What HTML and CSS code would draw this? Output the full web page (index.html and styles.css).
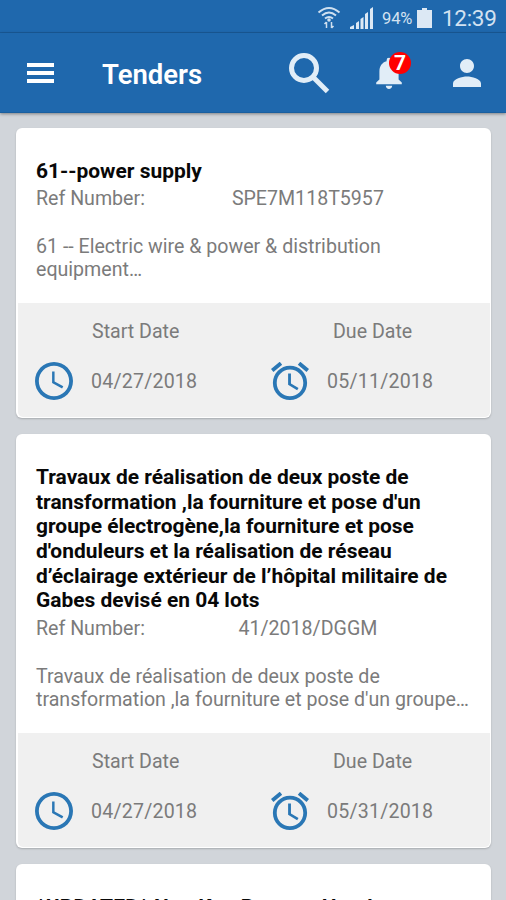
FILE: index.html
```html
<!DOCTYPE html>
<html lang="en">
<head>
<meta charset="utf-8">
<title>Tenders</title>
<link rel="stylesheet" href="styles.css">
</head>
<body>
<svg class="defs" aria-hidden="true">
  <symbol id="clock" viewBox="2 2 20 20"><path d="M11.99 2C6.47 2 2 6.48 2 12s4.47 10 9.99 10C17.52 22 22 17.52 22 12S17.52 2 11.99 2zM12 20c-4.42 0-8-3.58-8-8s3.58-8 8-8 8 3.58 8 8-3.58 8-8 8zm.3-13H11v6l5.250 2.900.65-1.130-4.600-2.570z"/></symbol>
  <symbol id="alarm" viewBox="2 2 20 20"><path d="M22 5.720l-4.600-3.860-1.290 1.530 4.600 3.860L22 5.720zM7.880 3.390L6.600 1.860 2 5.710l1.290 1.530 4.590-3.850zM12.500 8H11v6l4.750 2.850.75-1.230-4-2.370V8zM12 4c-4.970 0-9 4.030-9 9s4.020 9 9 9a9 9 0 0 0 0-18zm0 16c-3.870 0-7-3.130-7-7s3.130-7 7-7 7 3.130 7 7-3.130 7-7 7z"/></symbol>
</svg>
<div class="statusbar">
  <svg class="wifi" viewBox="0 0 24 24"><g fill="none" stroke="#cfe0f0" stroke-width="2"><path d="M1.500 6.500Q12-2.500 22.500 6.500M5 9.500Q12 3.500 19 9.500M8 12.500Q12 9.500 16 12.500"/><path stroke-width="1.500" d="M9.500 22v-6M7.500 18l2-2M14.500 16v6M16.500 20l-2 2"/></g><circle cx="12" cy="14" r="1.800" fill="#cfe0f0"/></svg>
  <svg class="signal" viewBox="0 0 24 24"><path fill="#dce8f4" d="M0 23v-2l4-2v4zM6 17l3-2v8H6zM10.500 13l3-2v12h-3zM15 8l3-2v17h-3zM20 3l3-2v22h-3z"/></svg>
  <span class="percent">94%</span>
  <svg class="battery" viewBox="0 0 15 20"><path fill="#dce8f4" d="M5 0h5v2h5v18H0V2h5z"/></svg>
  <span class="time">12:39</span>
</div>
<header class="appbar">
  <svg class="menu" viewBox="0 0 27 20"><path fill="#fff" d="M0 0h27v4H0zM0 8h27v4H0zM0 16h27v4H0z"/></svg>
  <h1>Tenders</h1>
  <svg class="search" viewBox="0 0 42 42"><g fill="none" stroke="#e1edf7" stroke-width="5"><circle cx="16" cy="16" r="12.500"/><path d="M25 25l14.500 14.500"/></g></svg>
  <div class="notify">
    <svg viewBox="4 2 16 20"><path fill="#e1edf7" d="M12 22c1.100 0 2-.9 2-2h-4c0 1.100.89 2 2 2zm6-6v-5c0-3.070-1.640-5.640-4.500-6.320V4a1.500 1.500 0 0 0-3 0v.68C7.630 5.360 6 7.920 6 11v5l-2 2v1h16v-1l-2-2z"/></svg>
    <span class="badge">7</span>
  </div>
  <svg class="person" viewBox="4 4 16 16"><path fill="#e1edf7" d="M12 12c2.210 0 4-1.790 4-4s-1.790-4-4-4-4 1.790-4 4 1.790 4 4 4zm0 2c-2.670 0-8 1.340-8 4v2h16v-2c0-2.660-5.330-4-8-4z"/></svg>
</header>
<main class="list">
  <article class="card">
    <div class="body">
      <h2>61--power supply</h2>
      <div class="ref"><span>Ref Number:</span><span class="num">SPE7M118T5957</span></div>
      <p>61 -- Electric wire &amp; power &amp; distribution<br>equipment…</p>
    </div>
    <div class="dates">
      <div class="date"><svg><use href="#clock"/></svg><span class="label">Start Date</span><span class="value">04/27/2018</span></div>
      <div class="date due"><svg><use href="#alarm"/></svg><span class="label">Due Date</span><span class="value">05/11/2018</span></div>
    </div>
  </article>
  <article class="card">
    <div class="body">
      <h2>Travaux de réalisation de deux poste de<br>transformation ,la fourniture et pose d'un<br>groupe électrogène,la fourniture et pose<br>d'onduleurs et la réalisation de réseau<br>d’éclairage extérieur de l’hôpital militaire de<br>Gabes devisé en 04 lots</h2>
      <div class="ref"><span>Ref Number:</span><span class="num">41/2018/DGGM</span></div>
      <p>Travaux de réalisation de deux poste de<br>transformation ,la fourniture et pose d'un groupe…</p>
    </div>
    <div class="dates">
      <div class="date"><svg><use href="#clock"/></svg><span class="label">Start Date</span><span class="value">04/27/2018</span></div>
      <div class="date due"><svg><use href="#alarm"/></svg><span class="label">Due Date</span><span class="value">05/31/2018</span></div>
    </div>
  </article>
  <article class="card">
    <div class="body"><h2 class="wide">*UPDATED* Nuu Kuu Pountry Hood</h2></div>
  </article>
</main>
</body>
</html>
```
FILE: styles.css
```css
* { box-sizing: border-box; }
body { margin: 0; height: 900px; overflow: hidden; background: #d1d5da; font-family: Roboto, sans-serif; color: #7b7b7b; }
.defs { position: absolute; width: 0; height: 0; }
h1, h2, p { margin: 0; }
svg { display: block; flex: none; }
.statusbar { height: 33px; background: #1f68ad; border-bottom: 1px solid #195a99; display: flex; align-items: center; justify-content: flex-end; padding: 4px 9px 0 0; color: #d3e2f1; }
.wifi { width: 24px; height: 24px; margin-right: 9px; }
.signal { width: 24px; height: 24px; margin-right: 8px; }
.percent { font-size: 16.500px; width: 31px; letter-spacing: -.1px; padding-top: 1px; }
.battery { width: 15px; height: 20px; margin: 0 10px 0 4px; }
.time { font-size: 22.500px; width: 55px; letter-spacing: -.3px; }
.appbar { height: 80px; background: #1f68ad; display: flex; align-items: center; padding: 0 25px 0 27px; border-bottom: 1px solid #1a5f9f; box-shadow: 0 1px 3px #0006; position: relative; }
.menu { width: 27px; height: 20px; }
h1 { margin-left: 48px; width: 186px; font-size: 27.500px; font-weight: 600; color: #fff; line-height: 32px; padding-top: 5px; }
.search { width: 42px; height: 42px; }
.notify { position: relative; margin-left: 46px; width: 26px; }
.notify > svg { width: 26px; height: 32px; }
.badge { position: absolute; left: 13px; top: -5px; width: 22px; height: 22px; border-radius: 50%; background: #f00; color: #fff; font-weight: 700; font-size: 21px; line-height: 22px; text-align: center; }
.person { width: 28px; height: 28px; margin-left: auto; }
.list { padding: 15px 15px 0 16px; display: flex; flex-direction: column; gap: 16px; }
.card { background: #fff; border-radius: 6px; box-shadow: 0 1px 2px #0003; padding: 0 1px 1px 2px; }
.body { padding: 30.500px 0 21.500px 18px; }
h2 { font-size: 20.950px; font-weight: 700; line-height: 24.700px; color: #080808; white-space: nowrap; }
.wide { letter-spacing: .2px; }
.ref { display: flex; font-size: 19.600px; line-height: 27px; padding-top: 2px; }
.ref .num { width: 310px; text-align: center; margin-left: 8px; }
p { font-size: 19.600px; line-height: 22.600px; margin-top: 24px; white-space: nowrap; }
.dates { background: #f0f0f0; height: 114.500px; border-radius: 0 0 5px 5px; display: grid; grid-template-columns: 236px 1fr; }
.date { display: grid; grid-template: 57px 42px / 38px auto; column-gap: 18px; align-items: center; justify-content: start; padding-left: 17px; }
.date svg { grid-area: 2 / 1; width: 38px; height: 38px; fill: #2a77b5; }
.label { grid-area: 1 / 2; font-size: 19.600px; padding-left: 1px; }
.due .label { padding-left: 6px; }
.value { grid-area: 2 / 2; font-size: 19.600px; letter-spacing: .2px; padding-top: 2px; }
```
